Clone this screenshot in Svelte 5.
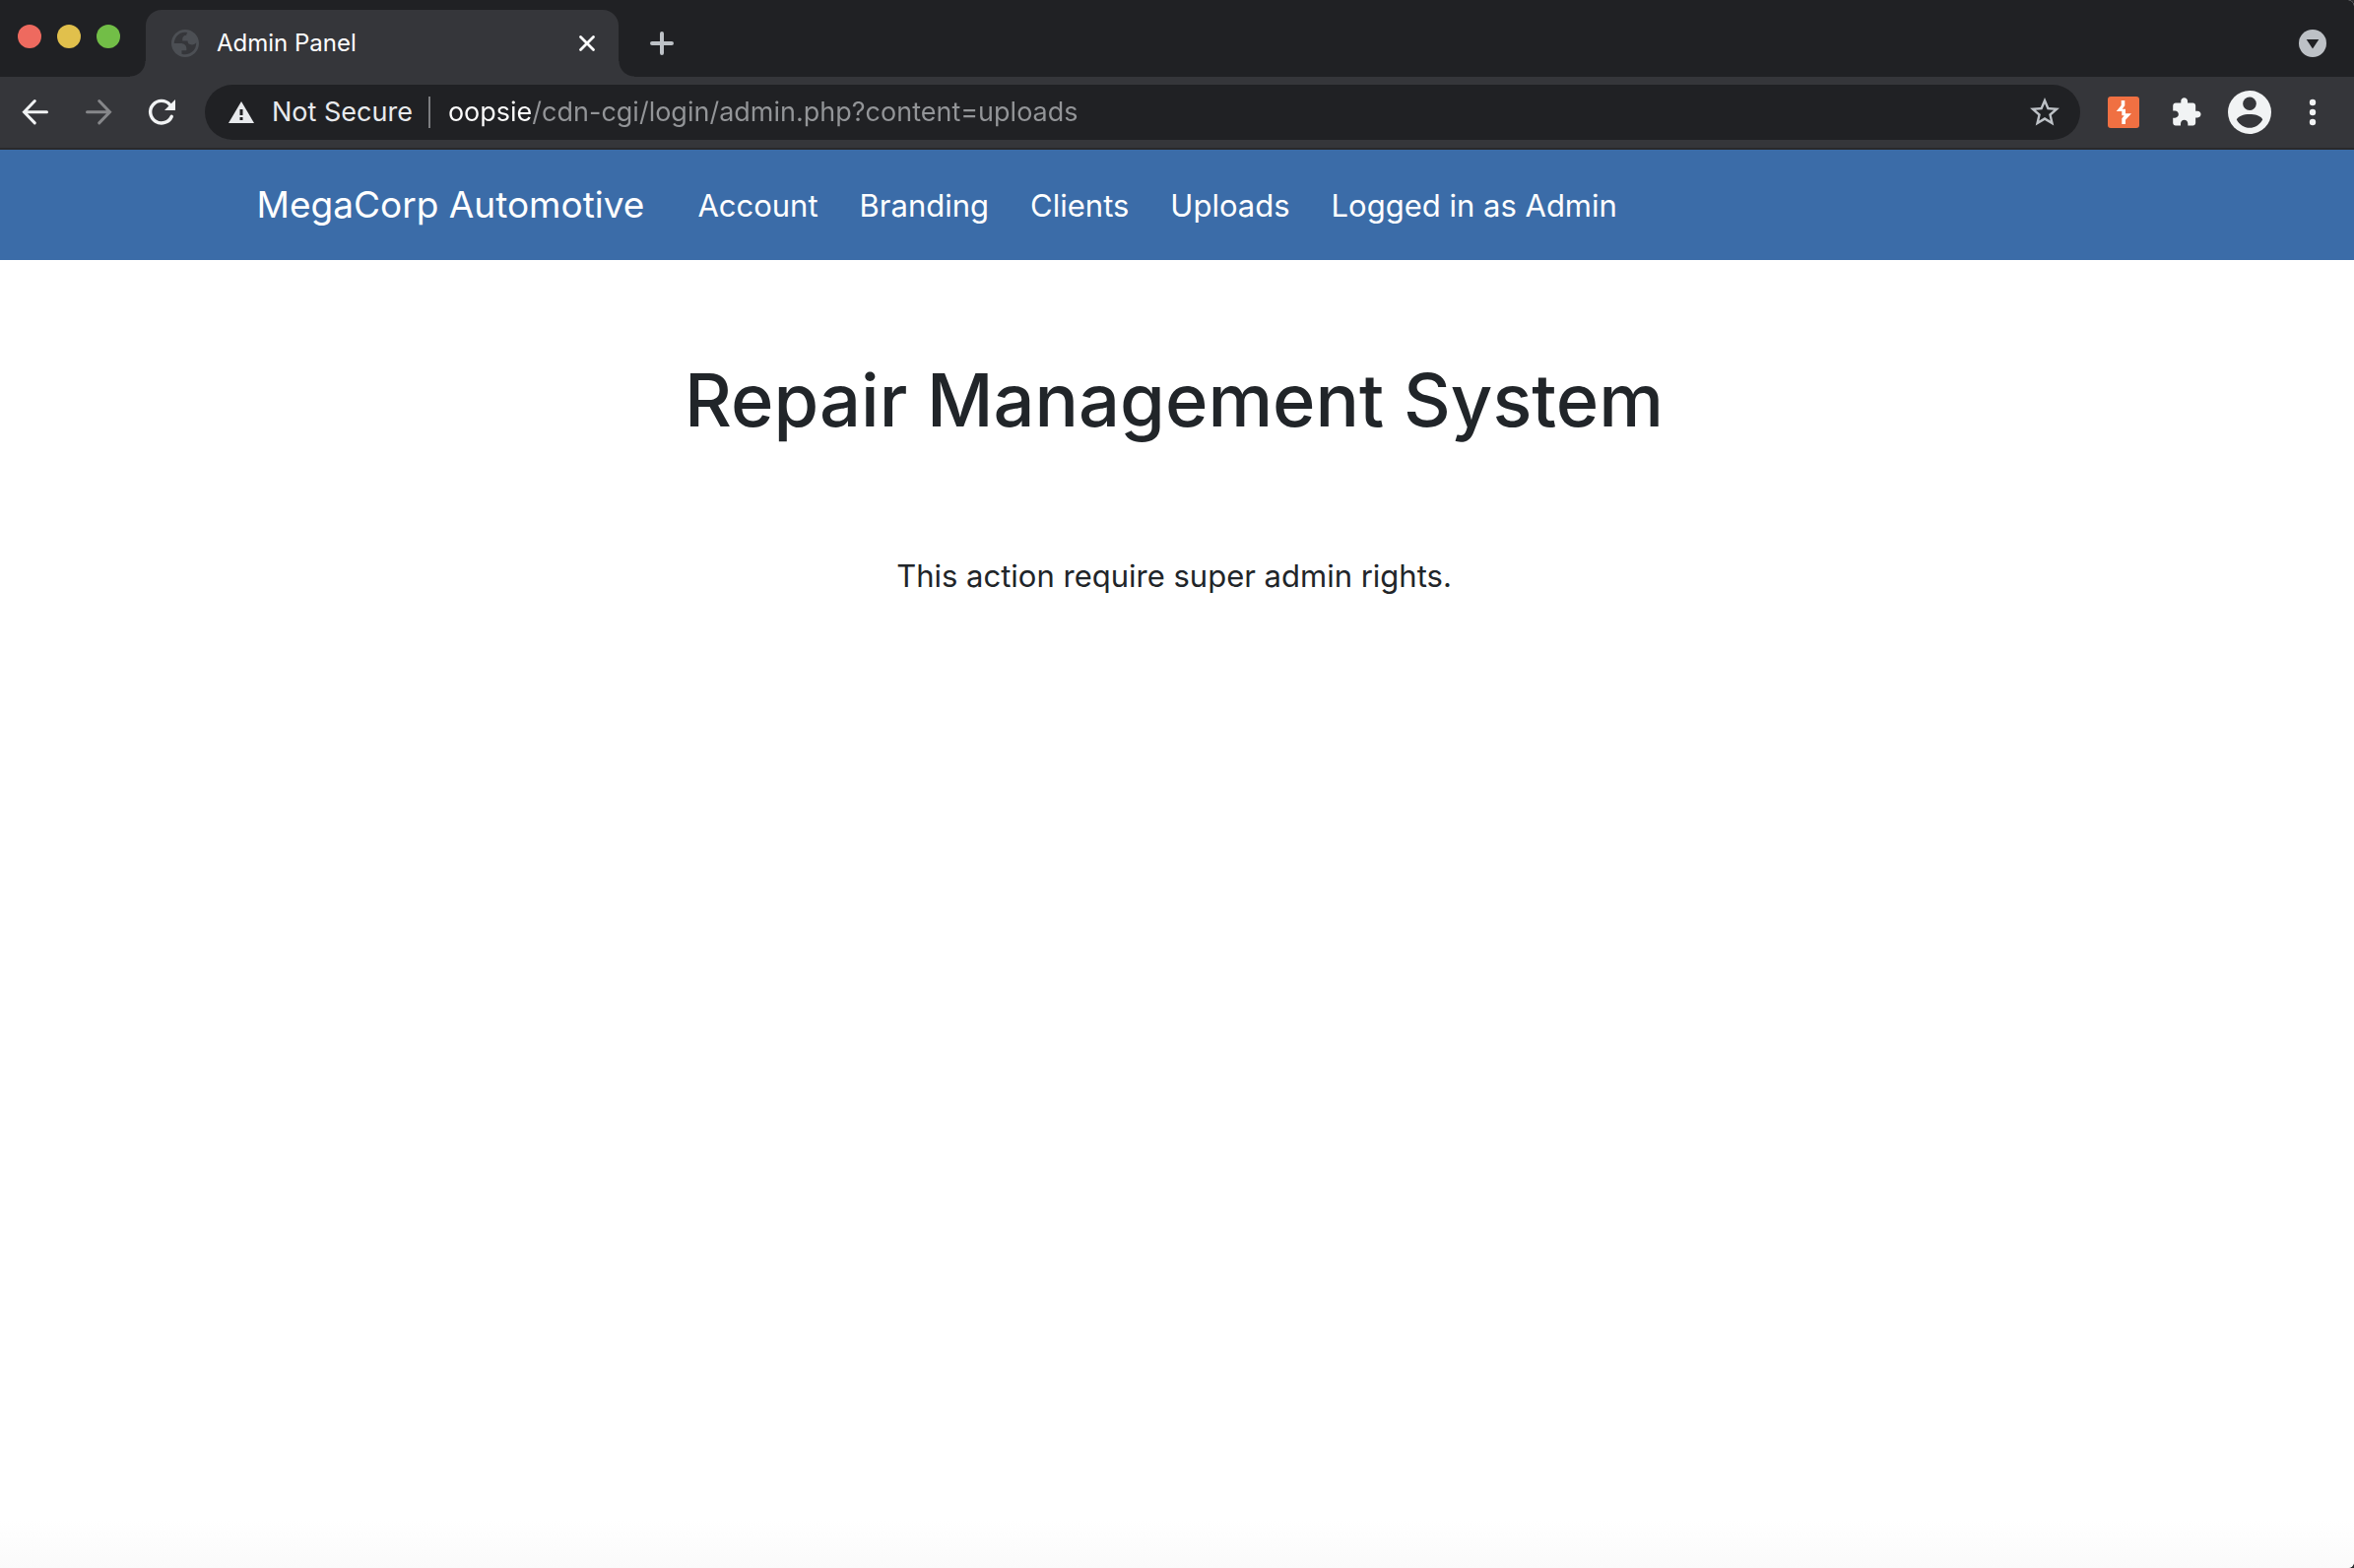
<script>
  const links = ['Account', 'Branding', 'Clients', 'Uploads', 'Logged in as Admin'];
  let address = $state('oopsie/cdn-cgi/login/admin.php?content=uploads');
</script>

<div class="window">
  <header class="strip">
    <div class="lights">
      <button class="light close" aria-label="Close window"></button>
      <button class="light minimise" aria-label="Minimise window"></button>
      <button class="light zoom" aria-label="Zoom window"></button>
    </div>
    <div class="tab">
      <svg class="globe" viewBox="2 2 20 20" aria-hidden="true">
        <path fill="#4c4f54" fill-rule="evenodd" d="M12 2c5.520 0 10 4.480 10 10s-4.480 10-10 10S2 17.520 2 12 6.480 2 12 2zM4 12h4.400c3.407.022 4.922 1.730 4.543 5.127H9.488v2.470a8.004 8.004 0 0 0 10.498-8.080C19.327 12.504 18.332 13 17 13c-2.137 0-3.206-.916-3.206-2.750h-3.748c-.274-2.728.683-4.092 2.870-4.092 0-.975.327-1.597.811-1.970A8.004 8.004 0 0 0 4 12z" />
      </svg>
      <span class="title">Admin Panel</span>
      <button class="tab-close" aria-label="Close tab">
        <svg viewBox="0 0 24 24"><path d="M5.500 5.500 18.500 18.500M18.500 5.500 5.500 18.500" stroke="#fff" stroke-width="2.800" stroke-linecap="round" /></svg>
      </button>
    </div>
    <button class="new-tab" aria-label="New tab">
      <svg viewBox="0 0 24 24"><path d="M12 2V22M2 12H22" stroke="#bdc1c6" stroke-width="4" stroke-linecap="round" /></svg>
    </button>
    <button class="search-tabs" aria-label="Search tabs">
      <svg viewBox="0 0 28 28"><circle cx="14" cy="14" r="14" fill="#bdc1c6" /><path d="M7.700 10H20.300L14 19.500Z" fill="#202124" /></svg>
    </button>
  </header>

  <div class="toolbar">
    <button class="tool" aria-label="Back">
      <svg viewBox="0 0 64 72"><path d="M43.500 35.700H21M31.300 24.500 20.500 35.700 31.300 46.900" fill="none" stroke="#f1f3f4" stroke-width="3" stroke-linecap="round" /></svg>
    </button>
    <button class="tool" aria-label="Forward" disabled>
      <svg viewBox="0 0 64 72"><path d="M20.500 35.700H43M32.700 24.500 43.500 35.700 32.700 46.900" fill="none" stroke="#86878a" stroke-width="3" stroke-linecap="round" /></svg>
    </button>
    <button class="tool" aria-label="Reload">
      <svg viewBox="0 0 64 72"><path d="M42.300 40.200A11.300 11.300 0 1 1 40.500 28.300" fill="none" stroke="#f1f3f4" stroke-width="3.400" stroke-linecap="round" /><path d="M46 23V34H35Z" fill="#f1f3f4" /></svg>
    </button>

    <form class="omnibox">
      <button type="button" class="security">
        <svg viewBox="0 0 26 22" aria-hidden="true"><path d="M13 0 26 22H0Z" fill="#e8eaed" /><path d="M11.500 8H14.500V14H11.500ZM11.500 16H14.500V19H11.500Z" fill="#202124" /></svg>
        <span>Not Secure</span>
      </button>
      <input class="address" type="text" aria-label="Address" bind:value={address} />
      <button type="button" class="star" aria-label="Bookmark this page">
        <svg viewBox="0 0 24 24"><path fill="#bdc1c6" d="M22 9.240l-7.190-.62L12 2 9.190 8.630 2 9.240l5.460 4.730L5.820 21 12 17.270 18.180 21l-1.630-7.030L22 9.240zM12 15.400l-3.760 2.270 1-4.280-3.320-2.880 4.380-.38L12 6.100l1.710 4.040 4.380.38-3.320 2.880 1 4.280L12 15.400z" /></svg>
      </button>
    </form>

    <button class="tool" aria-label="Proxy extension">
      <svg viewBox="0 0 64 72"><rect x="16" y="20" width="32" height="32" rx="3" fill="#f07042" /><path fill="#fff" d="M29.700 24H33.300V29.300L30.700 32.700H34V37.300H40L34 43.700V48H30.300V42.300L32.700 39.300H30.300V35H24.700L29.700 29Z" /></svg>
    </button>
    <button class="tool" aria-label="Extensions">
      <svg viewBox="0 0 64 72"><path transform="translate(15.500 19.800) scale(1.350)" fill="#f1f3f4" d="M20.500 11H19V7c0-1.100-.9-2-2-2h-4V3.500C13 2.120 11.880 1 10.500 1S8 2.120 8 3.500V5H4c-1.100 0-1.990.9-1.990 2v3.800H3.500c1.490 0 2.700 1.210 2.700 2.700s-1.210 2.700-2.700 2.700H2V20c0 1.100.9 2 2 2h3.800v-1.500c0-1.490 1.210-2.700 2.700-2.700 1.490 0 2.700 1.210 2.700 2.700V22H17c1.100 0 2-.9 2-2v-4h1.500c1.380 0 2.500-1.120 2.500-2.500S21.880 11 20.500 11z" /></svg>
    </button>
    <button class="tool" aria-label="Profile">
      <svg viewBox="0 0 64 72"><circle cx="32" cy="36" r="22" fill="#f1f3f4" /><circle cx="32" cy="27.200" r="6.800" fill="#35363a" /><path d="M18.800 43.500C20 40 26 38 32 38S44 40 45.200 43.500C42.500 48.500 37.500 51.800 32 51.800S21.500 48.500 18.800 43.500Z" fill="#35363a" /></svg>
    </button>
    <button class="tool" aria-label="Menu">
      <svg viewBox="0 0 64 72" fill="#f1f3f4"><circle cx="32" cy="26" r="3.200" /><circle cx="32" cy="36" r="3.200" /><circle cx="32" cy="46" r="3.200" /></svg>
    </button>
  </div>

  <nav class="site-nav">
    <a class="brand" href="#home">MegaCorp Automotive</a>
    <ul>
      {#each links as link}
        <li><a href="#{link.toLowerCase().replaceAll(' ', '-')}">{link}</a></li>
      {/each}
    </ul>
  </nav>

  <main>
    <h1>Repair Management System</h1>
    <p>This action require super admin rights.</p>
  </main>
</div>

<style>
  :global(body) {
    background: #2b2c2f;
  }
  .window {
    display: flex;
    flex-direction: column;
    min-height: 100vh;
    border-radius: 0 6px 6px 0;
    overflow: hidden;
    background: #fff;
    font-family: Inter, 'Liberation Sans', sans-serif;
  }
  button {
    display: flex;
    align-items: center;
    justify-content: center;
    margin: 0;
    padding: 0;
    border: 0;
    background: none;
    font: inherit;
  }
  svg {
    display: block;
    flex: none;
  }
  .strip {
    display: flex;
    align-items: center;
    height: 68px;
    padding: 10px 28px 0 18px;
    background: #202124;
  }
  .lights {
    display: flex;
    gap: 16px;
    margin-right: 26px;
    padding-bottom: 14px;
  }
  .light {
    width: 24px;
    height: 24px;
    border-radius: 50%;
  }
  .close { background: #ee6a5f; }
  .minimise { background: #e1c04c; }
  .zoom { background: #72be47; }
  .tab {
    position: relative;
    display: flex;
    align-items: center;
    box-sizing: border-box;
    width: 480px;
    height: 68px;
    padding: 0 20px 0 26px;
    border-radius: 16px 16px 0 0;
    background: #35363a;
  }
  .tab::before,
  .tab::after {
    content: '';
    position: absolute;
    bottom: 0;
    width: 16px;
    height: 16px;
  }
  .tab::before {
    right: 100%;
    background: radial-gradient(circle at 0 0, transparent 15px, #35363a 16px);
  }
  .tab::after {
    left: 100%;
    background: radial-gradient(circle at 100% 0, transparent 15px, #35363a 16px);
  }
  .globe {
    width: 28px;
    height: 28px;
  }
  .title {
    flex: 1;
    margin-left: 18px;
    color: #fff;
    font-size: 24px;
    line-height: 32px;
  }
  .tab-close svg,
  .new-tab svg {
    width: 24px;
    height: 24px;
  }
  .new-tab {
    margin-left: 32px;
  }
  .search-tabs {
    margin-left: auto;
  }
  .search-tabs svg {
    width: 28px;
    height: 28px;
  }
  .toolbar {
    display: flex;
    align-items: center;
    height: 72px;
    padding: 0 10px 0 4px;
    border-bottom: 2px solid #29292b;
    background: #35363a;
  }
  .tool svg {
    width: 64px;
    height: 72px;
  }
  .omnibox {
    display: flex;
    flex: 1;
    align-items: center;
    box-sizing: border-box;
    height: 56px;
    margin: 0 12px;
    padding: 0 18px 0 24px;
    border-radius: 28px;
    background: #202124;
    font-size: 27px;
  }
  .security {
    height: 32px;
    padding-right: 16px;
    border-right: 2px solid #7c7d80;
    color: #e8eaed;
    line-height: 32px;
    white-space: nowrap;
  }
  .security svg {
    width: 26px;
    height: 22px;
    margin-right: 18px;
  }
  .address {
    flex: 1;
    min-width: 0;
    height: 40px;
    margin: 0 0 0 18px;
    padding: 0;
    border: 0;
    outline: 0;
    background: linear-gradient(90deg, #fff 85px, #939598 85px);
    background-clip: text;
    -webkit-background-clip: text;
    -webkit-text-fill-color: transparent;
    color: #939598;
    font: inherit;
    line-height: 40px;
  }
  .star svg {
    width: 36px;
    height: 36px;
  }
  .site-nav {
    display: flex;
    align-items: center;
    height: 112px;
    padding: 0 10.9%;
    background: #3b6ca8;
  }
  .site-nav a {
    color: #fff;
    text-decoration: none;
    white-space: nowrap;
  }
  .brand {
    font-size: 37px;
    line-height: 60px;
  }
  ul {
    display: flex;
    gap: 42px;
    margin: 0 0 0 54px;
    padding: 2px 0 0;
    font-size: 31px;
    line-height: 48px;
    list-style: none;
  }
  main {
    flex: 1;
    padding: 94px 6px 0 0;
    background: linear-gradient(to top, #fafafa, #fff 48px);
    color: #212529;
    text-align: center;
  }
  h1 {
    margin: 0;
    font-size: 74px;
    font-weight: 500;
    line-height: 96px;
  }
  p {
    margin: 107px 0 0;
    font-size: 31px;
    line-height: 48px;
  }
</style>
